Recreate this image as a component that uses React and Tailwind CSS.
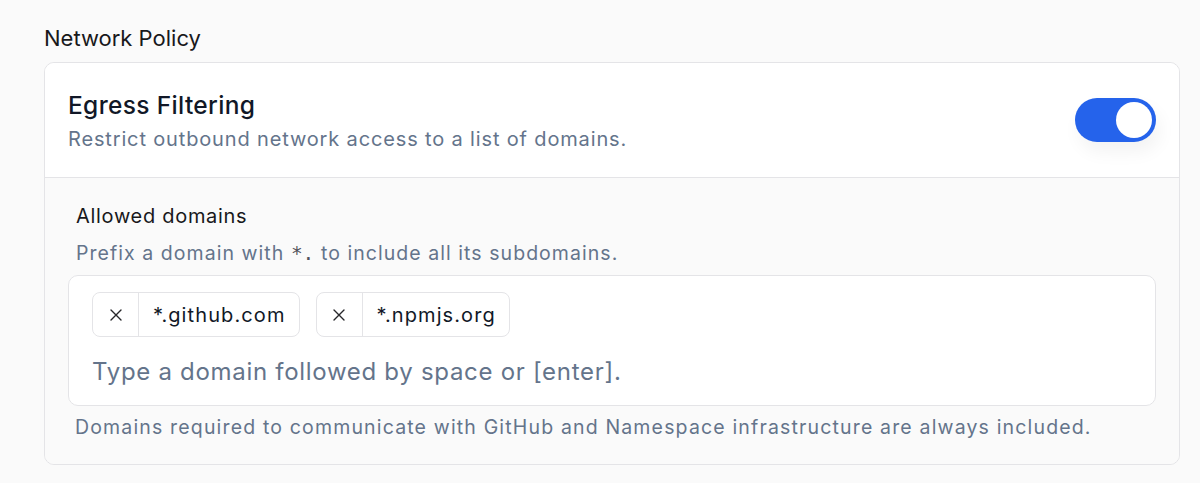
import { useState } from "react";

const font = { fontFamily: "Inter, 'Noto Sans', sans-serif" };

function DomainChip({ domain, onRemove }) {
  return (
    <div className="flex h-[45px] items-stretch rounded-lg border border-[#e4e4e7] bg-white text-[#111827]">
      <button
        onClick={onRemove}
        className="flex w-[45px] items-center justify-center text-[#27272a]"
      >
        <svg width="14" height="14" viewBox="0 0 14 14" fill="none">
          <path d="M2 2l10 10M12 2L2 12" stroke="currentColor" strokeWidth="1.4" strokeLinecap="round" />
        </svg>
      </button>
      <span className="flex items-center border-l border-[#e4e4e7] pl-[14px] pr-[13px] text-[20px] tracking-[1.1px]">
        {domain}
      </span>
    </div>
  );
}

export default function App() {
  const [enabled, setEnabled] = useState(true);
  const [domains, setDomains] = useState(["*.github.com", "*.npmjs.org"]);

  return (
    <div className="min-h-screen bg-[#fafafa] px-[44px] pt-[24px]" style={font}>
      <h2 className="text-[22px] leading-[28px] text-[#18181b]">Network Policy</h2>

      <div className="mt-[10px] w-[1136px] overflow-hidden rounded-[10px] border border-[#e4e4e7]">
        {/* Toggle row */}
        <div className="flex h-[114px] items-center justify-between bg-white px-[23px]">
          <div>
            <div className="text-[24.5px] font-medium leading-[32px] tracking-[0.35px] text-[#111827]">
              Egress Filtering
            </div>
            <div className="mt-[5px] text-[20px] leading-[26px] tracking-[0.85px] text-[#64748b]">
              Restrict outbound network access to a list of domains.
            </div>
          </div>
          <button
            onClick={() => setEnabled(!enabled)}
            className={`flex h-[44px] w-[81px] items-center rounded-full p-[4px] shadow-[4px_10px_18px_rgba(0,0,0,0.05)] ${
              enabled ? "justify-end bg-[#2563eb]" : "justify-start bg-[#e4e4e7]"
            }`}
          >
            <span className="h-[36px] w-[36px] rounded-full bg-white" />
          </button>
        </div>

        {/* Domain list */}
        <div className="border-t border-[#e4e4e7] bg-[#fafafa] px-[23px] pb-[24px] pt-[25px]">
          <div className="px-[8px] text-[20px] leading-[26px] tracking-[0.7px] text-[#18181b]">Allowed domains</div>
          <div className="mt-[11px] px-[8px] text-[19.5px] leading-[26px] tracking-[1.05px] text-[#64748b]">
            Prefix a domain with{" "}
            <span className="text-[#52525b] tracking-normal" style={{ fontFamily: "'DejaVu Sans Mono', monospace" }}>
              *.
            </span>{" "}
            to include all its subdomains.
          </div>

          <div className="mt-[8px] h-[131px] rounded-[10px] border border-[#e4e4e7] bg-white px-[23px] pt-[16px]">
            <div className="flex gap-[16px]">
              {domains.map((d) => (
                <DomainChip key={d} domain={d} onRemove={() => setDomains(domains.filter((x) => x !== d))} />
              ))}
            </div>
            <input
              className="mt-[18px] w-full bg-transparent text-[24px] leading-[34px] tracking-[0.7px] text-[#111827] outline-none placeholder:text-[#64748b]"
              placeholder="Type a domain followed by space or [enter]."
            />
          </div>

          <div className="mt-[8px] px-[7px] text-[19.5px] leading-[26px] tracking-[1.16px] text-[#64748b]">
            Domains required to communicate with GitHub and Namespace infrastructure are always included.
          </div>
        </div>
      </div>
    </div>
  );
}
